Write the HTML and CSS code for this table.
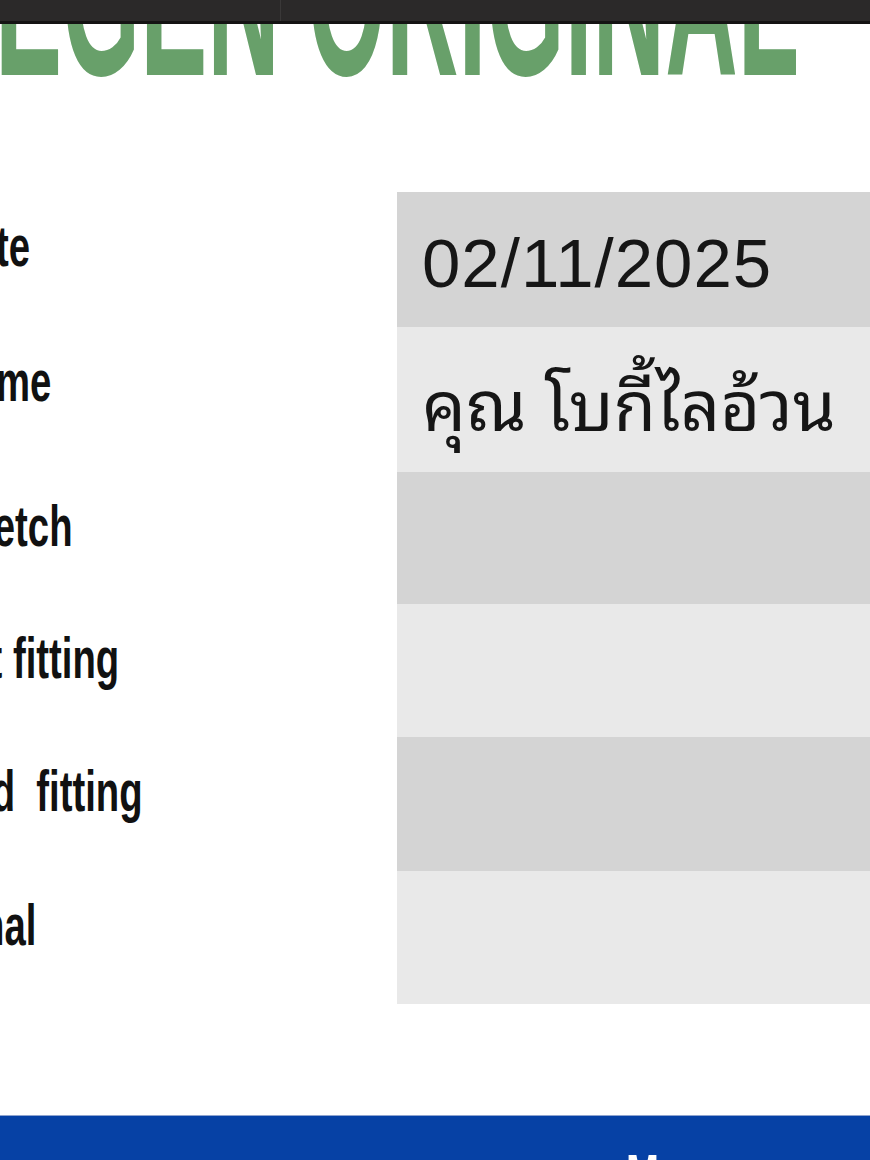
FILE: index.html
```html
<!DOCTYPE html>
<html lang="en">
<head>
<meta charset="utf-8">
<title>Order sheet</title>
<link rel="stylesheet" href="styles.css">
</head>
<body>
<div class="topbar">
  <div class="topbar-tab"></div>
  <div class="topbar-rest"></div>
</div>
<header class="brand">
  <h1 class="brand-title">EGEN ORIGINAL</h1>
</header>
<section class="sheet">
  <div class="label"><span class="label-text">Date</span></div>
  <div class="value value-dark value-date">02/11/2025</div>

  <div class="label"><span class="label-text">Name</span></div>
  <div class="value value-light value-thai">คุณ โบกี้ไลอ้วน</div>

  <div class="label"><span class="label-text">Sketch</span></div>
  <div class="value value-dark"></div>

  <div class="label"><span class="label-text">1st fitting</span></div>
  <div class="value value-light"></div>

  <div class="label"><span class="label-text">2nd&nbsp; fitting</span></div>
  <div class="value value-dark"></div>

  <div class="label"><span class="label-text">Final</span></div>
  <div class="value value-light"></div>
</section>
<footer class="footer">
  <span class="footer-text">More</span>
</footer>
</body>
</html>
```

FILE: styles.css
```css
html, body {
  margin: 0;
  padding: 0;
}

body {
  width: 870px;
  height: 1160px;
  overflow: hidden;
  background: #ffffff;
  font-family: "Liberation Sans", Arial, sans-serif;
  color: #111111;
}

.topbar {
  display: flex;
  height: 21px;
  background: #2b2929;
  border-bottom: 3px solid #141313;
}

.topbar-tab {
  width: 280px;
  border-right: 1px solid #3a3838;
}

.topbar-rest {
  flex: 1;
}

.brand {
  height: 80px;
  overflow: hidden;
}

.brand-title {
  margin: -143px 0 0 -5px;
  font-family: "Liberation Sans", Arial, sans-serif;
  font-weight: 700;
  font-size: 230px;
  line-height: 1;
  color: #68a06a;
  white-space: nowrap;
  transform: scaleX(0.437);
  transform-origin: left top;
}

.sheet {
  display: grid;
  grid-template-columns: 450px 1fr;
  grid-template-rows: 135px 145px 132px 133px 134px 133px;
  margin: 88px 0 0 -53px;
}

.label {
  padding-top: 25px;
  font-weight: 700;
  font-size: 58px;
  line-height: 58px;
  white-space: nowrap;
  color: #111111;
}

.label-text {
  display: inline-block;
  transform: scaleX(0.66);
  transform-origin: left center;
}

.value {
  padding: 8px 0 0 25px;
  font-size: 69px;
  line-height: 127px;
  color: #161616;
  white-space: nowrap;
}

.value-date {
  letter-spacing: 1px;
}

.value-thai {
  padding-top: 10px;
  font-family: "Noto Sans Thai Looped", "Loma", "Garuda", "Waree", "Noto Sans Thai", sans-serif;
  letter-spacing: 0;
}

.value-dark {
  background: #d4d4d4;
}

.value-light {
  background: #e9e9e9;
}

.footer {
  margin-top: 111px;
  height: 60px;
  background: #0641a5;
  border-top: 1px solid #8fa4cf;
  padding-left: 626px;
}

.footer-text {
  display: inline-block;
  padding-top: 30px;
  font-weight: 700;
  font-size: 60px;
  line-height: 60px;
  color: #ffffff;
  transform: scaleX(0.66);
  transform-origin: left center;
}
```
